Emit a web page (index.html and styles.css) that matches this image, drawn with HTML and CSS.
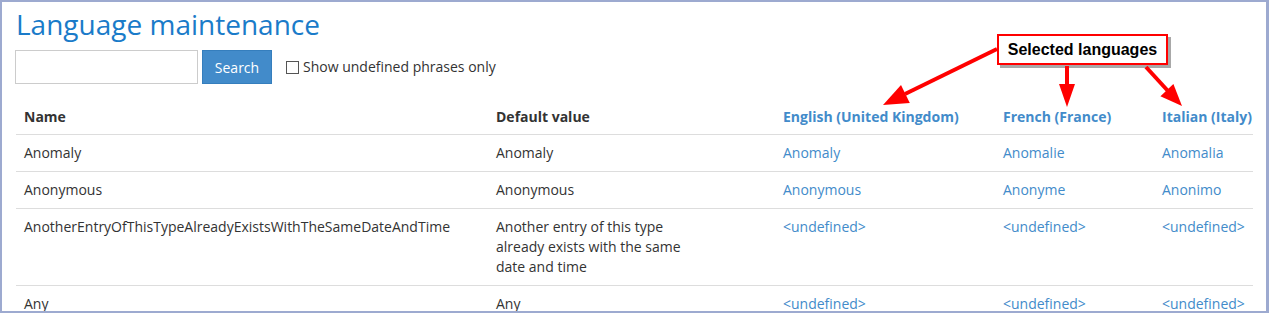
FILE: index.html
```html
<!DOCTYPE html>
<html>
<head>
<meta charset="utf-8">
<title>Language maintenance</title>
<link rel="stylesheet" href="styles.css">
</head>
<body>
<div class="frame">
  <h1 class="title">Language maintenance</h1>
  <div class="search-row">
    <input class="search-input" type="text">
    <button class="search-btn">Search</button>
    <label class="undef"><span class="checkbox"></span>Show undefined phrases only</label>
  </div>
  <table class="phrases">
    <colgroup>
      <col class="c-name"><col class="c-def"><col class="c-en"><col class="c-fr"><col class="c-it">
    </colgroup>
    <thead>
      <tr>
        <th>Name</th>
        <th>Default value</th>
        <th class="lang">English (United Kingdom)</th>
        <th class="lang">French (France)</th>
        <th class="lang">Italian (Italy)</th>
      </tr>
    </thead>
    <tbody>
      <tr>
        <td>Anomaly</td>
        <td><div class="defval">Anomaly</div></td>
        <td><a>Anomaly</a></td>
        <td><a>Anomalie</a></td>
        <td><a>Anomalia</a></td>
      </tr>
      <tr>
        <td>Anonymous</td>
        <td><div class="defval">Anonymous</div></td>
        <td><a>Anonymous</a></td>
        <td><a>Anonyme</a></td>
        <td><a>Anonimo</a></td>
      </tr>
      <tr>
        <td>AnotherEntryOfThisTypeAlreadyExistsWithTheSameDateAndTime</td>
        <td><div class="defval">Another entry of this type already exists with the same date and time</div></td>
        <td><a>&lt;undefined&gt;</a></td>
        <td><a>&lt;undefined&gt;</a></td>
        <td><a>&lt;undefined&gt;</a></td>
      </tr>
      <tr>
        <td>Any</td>
        <td><div class="defval">Any</div></td>
        <td><a>&lt;undefined&gt;</a></td>
        <td><a>&lt;undefined&gt;</a></td>
        <td><a>&lt;undefined&gt;</a></td>
      </tr>
    </tbody>
  </table>

  <div class="callout">Selected languages</div>
  <svg class="arrows" width="1269" height="313" viewBox="0 0 1269 313">
    <g fill="#f00" stroke="none">
      <line x1="997" y1="49" x2="905" y2="94" stroke="#f00" stroke-width="4"/>
      <polygon points="883,105 909.8,103 901,85"/>
      <line x1="1067" y1="66" x2="1067" y2="85" stroke="#f00" stroke-width="4"/>
      <polygon points="1059,84 1075,84 1067,107"/>
      <line x1="1146" y1="67" x2="1168" y2="91" stroke="#f00" stroke-width="4"/>
      <polygon points="1182,106 1160.4,96.3 1173.4,83.9"/>
    </g>
  </svg>
</div>
</body>
</html>
```

FILE: styles.css
```css
html, body {
  margin: 0;
  padding: 0;
  background: #fff;
}

.frame {
  position: relative;
  width: 1269px;
  height: 313px;
  box-sizing: border-box;
  border-style: solid;
  border-color: #9daad0;
  border-width: 2px 3px 2px 2px;
  padding: 0 0 0 13px;
  overflow: hidden;
  font-family: "Open Sans", "Liberation Sans", sans-serif;
  font-size: 14px;
  color: #333;
}

.title {
  margin: 6px 0 9px 1px;
  font-size: 28px;
  line-height: 33px;
  font-weight: 400;
  color: #1a7bc9;
}

.search-row {
  display: flex;
  align-items: center;
  height: 34px;
}

.search-input {
  box-sizing: border-box;
  width: 183px;
  height: 34px;
  margin: 0;
  border: 1px solid #ccc;
  padding: 6px 12px;
  font-family: inherit;
  font-size: 14px;
}

.search-btn {
  box-sizing: border-box;
  width: 70px;
  height: 34px;
  margin: 0 0 0 4px;
  border: 1px solid #357ebd;
  background: #428bca;
  color: #fff;
  font-family: inherit;
  font-size: 14px;
  padding: 0;
}

.undef {
  display: flex;
  align-items: center;
  margin-left: 14px;
  line-height: 20px;
}

.checkbox {
  display: inline-block;
  width: 11px;
  height: 11px;
  border: 1px solid #555;
  background: #fff;
  margin-right: 4px;
}

.phrases {
  margin: 14px 0 0 1px;
  border-collapse: collapse;
  table-layout: fixed;
  width: 1237px;
}

.c-name { width: 472px; }
.c-def { width: 287px; }
.c-en { width: 220px; }
.c-fr { width: 159px; }
.c-it { width: 99px; }

.phrases th,
.phrases td {
  padding: 8px;
  line-height: 20px;
  text-align: left;
  vertical-align: top;
  white-space: nowrap;
}

.phrases th {
  font-weight: 700;
  padding: 9px 8px 7px;
  border-bottom: 1px solid #ddd;
}

.phrases td {
  border-top: 1px solid #ddd;
}

.phrases th.lang {
  color: #428bca;
}

.phrases a {
  color: #428bca;
  text-decoration: none;
}

.defval {
  white-space: normal;
  max-width: 200px;
}

.callout {
  position: absolute;
  left: 995px;
  top: 32px;
  width: 171px;
  height: 31px;
  box-sizing: border-box;
  border: 2px solid #f00;
  background: #fff;
  box-shadow: 3px 3px 0 #a8a8a8;
  font-family: "Liberation Sans", Arial, sans-serif;
  font-weight: 700;
  font-size: 16px;
  line-height: 27px;
  color: #000;
  text-align: center;
}

.arrows {
  position: absolute;
  left: -2px;
  top: -2px;
  pointer-events: none;
}
```
